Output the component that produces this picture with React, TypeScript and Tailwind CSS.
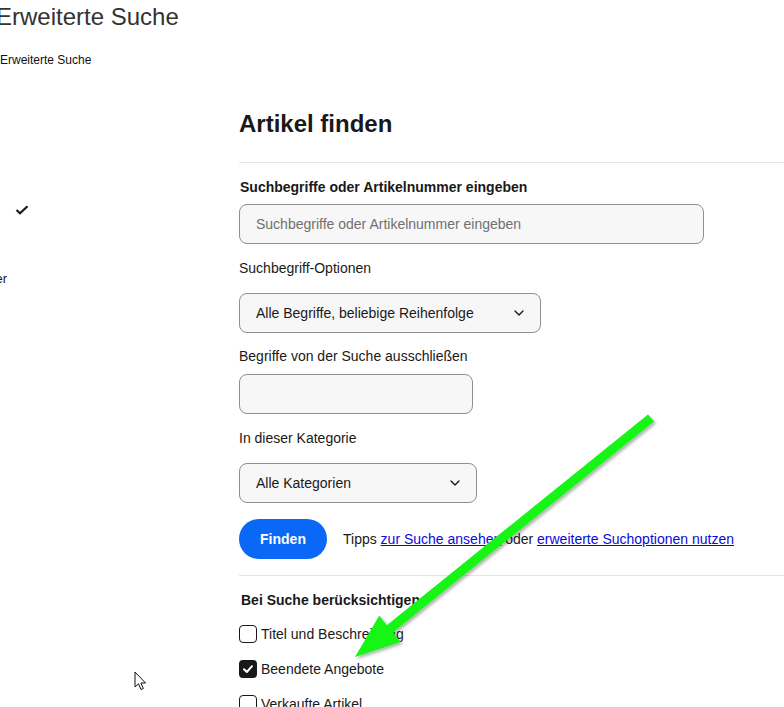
import { ChevronDown } from "lucide-react";

const labelCls = "text-[14px] leading-5 text-[#191919]";
const fieldCls =
  "h-[40px] rounded-[8px] border border-[#8f8f8f] bg-[#f7f7f7] px-4 text-[14px] text-[#191919] flex items-center";

function Select({ value, width }: { value: string; width: string }) {
  return (
    <div className={`${fieldCls} ${width} justify-between pr-[13px]`}>
      <span>{value}</span>
      <ChevronDown className="w-[16px] h-[16px] text-[#191919]" strokeWidth={2} />
    </div>
  );
}

function Checkbox({ label, checked }: { label: string; checked?: boolean }) {
  return (
    <div className="h-6 flex items-center gap-[4px]">
      {checked ? (
        <span className="w-[18px] h-[18px] rounded-[4px] bg-[#191919] flex items-center justify-center">
          <svg viewBox="0 0 12 12" className="w-[12px] h-[12px]">
            <path d="M2 6.3 L4.8 9 L10 3.2" fill="none" stroke="white" strokeWidth="2" strokeLinecap="round" strokeLinejoin="round" />
          </svg>
        </span>
      ) : (
        <span className="w-[18px] h-[18px] rounded-[4px] border-[1.5px] border-[#191919] bg-white" />
      )}
      <span className="text-[14px] text-[#191919]">{label}</span>
    </div>
  );
}

export default function App() {
  return (
    <div
      className="relative w-[784px] h-[707px] overflow-hidden bg-white"
      style={{ fontFamily: '"Liberation Sans", Arial, sans-serif' }}
    >
      {/* page header */}
      <h1 className="mt-[3px] -ml-[4px] text-[24px] leading-[28px] text-[#333] whitespace-nowrap">
        Erweiterte Suche
      </h1>
      <div className="mt-[21px] text-[12px] leading-4 text-[#111]">Erweiterte Suche</div>

      <div className="flex">
        {/* left nav, scrolled partly out of view */}
        <aside className="w-[239px] shrink-0 relative">
          <svg viewBox="0 0 14 10" className="absolute left-[15px] top-[137px] w-[14px] h-[10px]">
            <path d="M1.5 5 L5 8.3 L12.5 1.3" fill="none" stroke="#191919" strokeWidth="2.2" />
          </svg>
          <div className="absolute left-0 top-[203px] w-[7px] overflow-hidden flex justify-end whitespace-nowrap text-[13px] leading-4 text-[#191919]">
            Verkäufer
          </div>
        </aside>

        <main className="flex-1 mt-[42px]">
          <h2 className="text-[24px] leading-[28px] font-bold text-[#191919]">Artikel finden</h2>
          <div className="mt-[24px] border-t border-[#e5e5e5]" />

          <div className={`mt-[14px] ${labelCls} font-bold pl-[1px]`}>
            Suchbegriffe oder Artikelnummer eingeben
          </div>
          <div className={`mt-[7px] w-[465px] ${fieldCls} text-[#707070]`}>
            Suchbegriffe oder Artikelnummer eingeben
          </div>

          <div className={`mt-[14px] ${labelCls}`}>Suchbegriff-Optionen</div>
          <div className="mt-[15px]">
            <Select value="Alle Begriffe, beliebige Reihenfolge" width="w-[302px]" />
          </div>

          <div className={`mt-[13px] ${labelCls}`}>Begriffe von der Suche ausschließen</div>
          <div className={`mt-[8px] w-[234px] ${fieldCls}`} />

          <div className={`mt-[14px] ${labelCls}`}>In dieser Kategorie</div>
          <div className="mt-[15px]">
            <Select value="Alle Kategorien" width="w-[238px]" />
          </div>

          <div className="mt-[16px] flex items-center gap-4">
            <button className="h-[40px] w-[88px] rounded-full bg-[#0968f6] text-white text-[14px] font-bold">
              Finden
            </button>
            <p className="text-[14px] text-[#191919]">
              Tipps{" "}
              <a href="#" className="text-[#0b0bd9] underline">
                zur Suche ansehen
              </a>{" "}
              oder{" "}
              <a href="#" className="text-[#0b0bd9] underline">
                erweiterte Suchoptionen nutzen
              </a>
            </p>
          </div>

          <div className="mt-[16px] border-t border-[#e5e5e5]" />

          <div className={`mt-[14px] ${labelCls} font-bold pl-[2px]`}>Bei Suche berücksichtigen</div>
          <div className="mt-[12px] flex flex-col gap-[11px]">
            <Checkbox label="Titel und Beschreibung" />
            <Checkbox label="Beendete Angebote" checked />
            <Checkbox label="Verkaufte Artikel" />
          </div>
        </main>
      </div>

      {/* green pointer arrow */}
      <svg className="absolute left-0 top-0 w-[784px] h-[707px] pointer-events-none" viewBox="0 0 784 707">
        <defs>
          <filter id="arrowShadow" x="-10%" y="-10%" width="120%" height="120%">
            <feDropShadow dx="2" dy="2" stdDeviation="1.5" floodColor="#000" floodOpacity="0.3" />
          </filter>
        </defs>
        <polygon
          points="648,414.5 386.8,625.2 379.3,615.5 355,657 400.7,641.9 393.2,632.2 654,421.5"
          fill="#14f514"
          filter="url(#arrowShadow)"
        />
      </svg>

      {/* mouse pointer */}
      <svg className="absolute left-[134px] top-[671px] w-[14px] h-[22px]" viewBox="0 0 14 22">
        <path
          d="M1 1 L1 16 L4.5 12.8 L7 18.5 L9.3 17.5 L6.9 12 L11.5 12 Z"
          fill="white"
          stroke="#111"
          strokeWidth="1"
          strokeLinejoin="round"
        />
      </svg>
    </div>
  );
}
